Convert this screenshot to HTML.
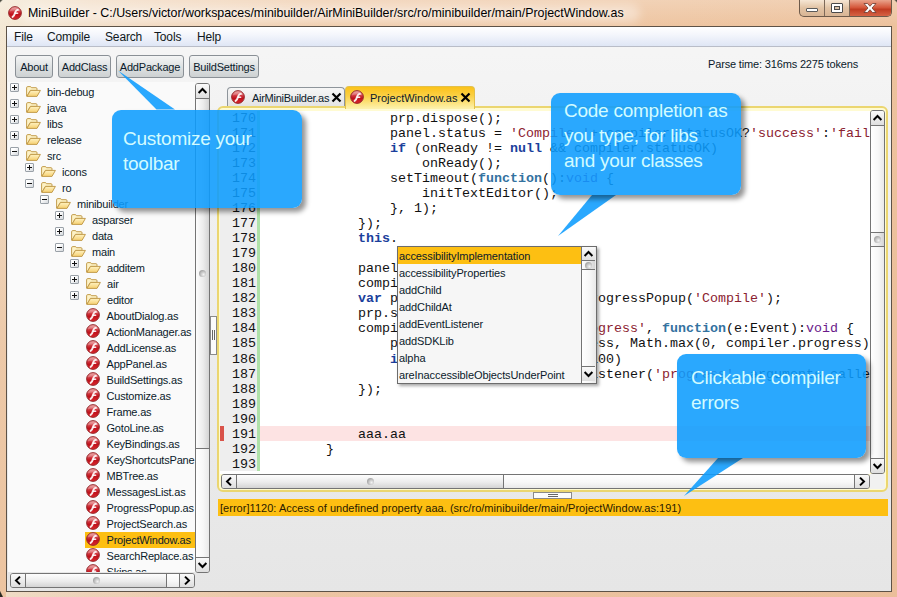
<!DOCTYPE html><html><head><meta charset="utf-8"><title>MiniBuilder</title><style>
*{box-sizing:border-box;margin:0;padding:0}
html,body{width:897px;height:597px;overflow:hidden}
body{position:relative;font-family:"Liberation Sans",sans-serif;font-size:11px;color:#0b1a2b;background:#ecc9a6}
.abs{position:absolute}
#frame{position:absolute;left:0;top:0;width:897px;height:597px;background:
 linear-gradient(to right,#f4e9d6 0,#f2dcc4 90px,#efcaa8 320px,#edc29d 897px);}
#frame:before{content:"";position:absolute;left:0;top:0;width:897px;height:597px;background:linear-gradient(to bottom,rgba(255,255,255,.22) 0,rgba(255,255,255,0) 26px,rgba(226,176,142,.04) 160px,rgba(226,176,142,.14) 380px,rgba(226,176,142,.22) 597px)}
#frame:after{content:"";position:absolute;left:20px;top:4px;width:620px;height:19px;border-radius:10px;background:rgba(255,255,255,.38);filter:blur(5px)}
#lstrip{position:absolute;left:0;top:26px;width:6px;height:571px;background:linear-gradient(to bottom,rgba(236,198,164,0) 0,rgba(236,198,164,.9) 330px,#ecc4a0 571px)}
#title{position:absolute;left:28px;top:6px;font-size:12.4px;color:#000;white-space:nowrap;letter-spacing:0;text-shadow:0 0 5px rgba(255,255,255,.8)}
#client{position:absolute;left:6px;top:26px;width:886px;height:566px;border:1px solid #5d5247;background:linear-gradient(#f6f6f6 0,#f2f2f2 100px,#e6e6e6 100%)}
#menubar{position:absolute;left:7px;top:27px;width:884px;height:20px;background:linear-gradient(#fff 0,#f4f6fc 40%,#dfe6f5 100%);border-bottom:1px solid #b9bdc8}
#menubar span{position:absolute;top:3px;font-size:12px;color:#101820;letter-spacing:-.15px}
.btn{position:absolute;top:55px;height:23px;border:1px solid #8a9096;border-radius:3px;background:linear-gradient(#f4f5f5,#dfe2e3 50%,#cdd1d2);font-size:11px;line-height:23px;text-align:center;color:#0b1a2b;letter-spacing:-.2px}
#tree{position:absolute;left:8px;top:82px;width:187px;height:490px;background:#fafafa;overflow:hidden}
.row{position:absolute;left:0;height:16px;width:187px;line-height:16px;white-space:nowrap}
.row .t{position:absolute;top:0;letter-spacing:-.2px}
.exp{position:absolute;top:-1px;width:9px;height:9px;border:1px solid #9aa1a8;border-radius:1px;background:linear-gradient(135deg,#fff 30%,#d4d8dc)}
.exp:before{content:"";position:absolute;left:1px;top:3px;width:5px;height:1px;background:#111}
.exp.p:after{content:"";position:absolute;left:3px;top:1px;width:1px;height:5px;background:#111}
.ico{position:absolute;top:0px;width:14px;height:14px}
.fo{position:absolute;top:2px;width:15px;height:11px}
.vs{position:absolute;width:15px;border:1px solid #747474;border-radius:3px;background:linear-gradient(to right,#fff,#f7f7f7 55%,#e9e9e9);overflow:hidden}
.hs{position:absolute;height:15px;border:1px solid #747474;border-radius:3px;background:linear-gradient(#fff,#f7f7f7 55%,#e9e9e9);overflow:hidden}
.vs i,.hs i{position:absolute;display:block}
.vs .b{left:0;width:13px;height:14px;background:linear-gradient(#fafafa,#dedede)}
.hs .b{top:0;width:14px;height:13px;background:linear-gradient(#fafafa,#dedede)}
.vs .l{left:0;width:13px;height:1px;background:#747474}
.hs .l{top:0;width:1px;height:13px;background:#747474}
.vs .th{left:0;width:13px;background:linear-gradient(to right,#fdfdfd,#ececec 55%,#d4d4d4)}
.hs .th{top:0;height:13px;background:linear-gradient(#fdfdfd,#ececec 55%,#d4d4d4)}
.grip{width:7px;height:7px;border-radius:50%;background:radial-gradient(circle at 65% 65%,#f4f4f4 0,#a0a0a0 75%)}
.vs svg,.hs svg{position:absolute;left:0;top:0}
.tab{position:absolute;top:87px;height:21px;border:1px solid #8e959b;border-bottom:none;border-radius:4px 4px 0 0;font-size:11px;line-height:20px;white-space:nowrap}
#panel{position:absolute;left:217px;top:106px;width:671px;height:386px;border:2px solid #ebd670;border-radius:6px;background:#fffbd2}
#ed{position:absolute;left:220px;top:111px;width:650px;height:363px;background:#fff;overflow:hidden;font-family:"Liberation Mono",monospace;font-size:13.33px;line-height:15px;color:#111}
#gutter{position:absolute;left:0;top:0;width:37px;height:360px;background:#eeeeee}
#gline{position:absolute;left:37px;top:0;width:3px;height:360px;background:#aee1a8}
.ln{position:absolute;left:12px;white-space:pre}
.cl{position:absolute;left:42px;white-space:pre}
.kw{color:#1b3f9c;font-weight:bold}
.kf{color:#33729f;font-weight:bold}
.st{color:#8b2230}
.ty{color:#6a1a8a}
#ac{position:absolute;left:397px;top:246px;width:200px;height:138px;border:1px solid #6c6c6c;background:#f6f6f6;box-shadow:2px 2px 3px rgba(0,0,0,.35)}
#ac div.i{position:absolute;left:0;width:183px;height:17px;line-height:19px;padding-left:1px;font-size:11px;white-space:nowrap;letter-spacing:-.1px}
#err{position:absolute;left:218px;top:499px;width:670px;height:17px;background:#fdbf12;font-size:11px;line-height:19px;letter-spacing:.03px;padding-left:2px;white-space:nowrap;color:#2a1a00}
.call{position:absolute;border-radius:9px;background:rgba(13,156,254,.88);box-shadow:4px 4px 5px rgba(0,0,0,.42);color:#d2fbff;font-size:19px;letter-spacing:-.25px;line-height:25px;white-space:nowrap}
.call span{position:absolute}
</style></head><body>

<svg width="0" height="0" style="position:absolute">
<defs>
<radialGradient id="rg" cx="40%" cy="30%" r="75%"><stop offset="0" stop-color="#f57a72"/><stop offset=".45" stop-color="#d8252a"/><stop offset="1" stop-color="#a00d14"/></radialGradient>
<linearGradient id="rl" x1="0" y1="0" x2="0" y2="1"><stop offset="0" stop-color="#ea9a9a"/><stop offset=".42" stop-color="#cf3039"/><stop offset=".6" stop-color="#be121c"/><stop offset="1" stop-color="#dc262c"/></linearGradient>
<linearGradient id="fg" x1="0" y1="0" x2="0" y2="1"><stop offset="0" stop-color="#fff3c4"/><stop offset="1" stop-color="#f6cf6e"/></linearGradient>
<symbol id="fl" viewBox="0 0 14 14">
<circle cx="7" cy="7" r="6.4" fill="url(#rl)" stroke="#8e2528" stroke-width=".9"/>
<path d="M1.6 5.6 A5.6 5.6 0 0 1 12.4 5.6 A9 4.4 0 0 0 1.6 5.6Z" fill="#fff" opacity=".22"/>
<path d="M9.9 3.9 C8.2 3.8 7.6 5.3 7.1 6.9 C6.6 8.6 6 10 4.6 10.9" fill="none" stroke="#fff" stroke-width="1.9" stroke-linecap="round" opacity=".9"/><path d="M7.2 7.2 L9.6 7.2" stroke="#fff" stroke-width="1.6" stroke-linecap="round" opacity=".9"/>
</symbol>
<symbol id="fo" viewBox="0 0 15 11">
<path d="M0.6 10 L0.6 1.8 Q0.6 0.6 1.8 0.6 L4.2 0.6 Q5.2 0.6 5.5 1.7 L10 1.7 Q11 1.7 11 2.8 L11 4.4 L4.4 4.4 L1 10.2Z" fill="#fdf2c6" stroke="#c39d4e" stroke-width="1" stroke-linejoin="round"/>
<path d="M0.9 10.4 L4.5 4.4 L14.4 4.4 L11 10.4 Z" fill="url(#fg)" stroke="#c39d4e" stroke-width="1" stroke-linejoin="round"/>
</symbol>
</defs></svg>

<div id="frame"></div><div id="lstrip"></div><div class="abs" style="left:0;top:591px;width:3px;height:6px;background:linear-gradient(to top right,#2a2a22 40%,rgba(42,42,34,0) 60%)"></div><div class="abs" style="left:0;top:0;width:3px;height:3px;background:linear-gradient(to bottom right,#4a4a40 25%,rgba(74,74,64,0) 55%)"></div><div class="abs" style="left:894px;top:0;width:3px;height:3px;background:linear-gradient(to bottom left,#4a4a40 25%,rgba(74,74,64,0) 55%)"></div>
<svg class="abs" style="left:8px;top:6px" width="14" height="14"><use href="#fl"/></svg>
<div id="title">MiniBuilder - C:/Users/victor/workspaces/minibuilder/AirMiniBuilder/src/ro/minibuilder/main/ProjectWindow.as</div>
<div class="abs" style="left:799px;top:0;width:93px;height:17px;border:1px solid #6d5a4a;border-top:none;border-radius:0 0 5px 5px;overflow:hidden;background:linear-gradient(#f6e6d4,#e2c3a4 50%,#d8b595)">
<div class="abs" style="left:24px;top:0;width:1px;height:17px;background:#7d6959"></div>
<div class="abs" style="left:49px;top:0;width:1px;height:17px;background:#7d6959"></div>
<div class="abs" style="left:50px;top:0;width:42px;height:17px;background:linear-gradient(#e9a48c,#d4563a 45%,#c03c22 55%,#d9694a)"></div>
<div class="abs" style="left:6px;top:8px;width:12px;height:4px;background:#fff;border:1px solid #5a5a5a;border-radius:1px"></div>
<div class="abs" style="left:31px;top:3px;width:12px;height:10px;background:#fff;border:1px solid #4a4a4a;border-radius:1px"></div>
<div class="abs" style="left:34px;top:6px;width:6px;height:4px;background:#d7c0a8;border:1px solid #4a4a4a"></div>
<svg class="abs" style="left:62px;top:2px" width="16" height="12" viewBox="0 0 16 12"><path d="M2 1.5 L5.5 1.5 L8 4.3 L10.5 1.5 L14 1.5 L10 6 L14 10.5 L10.5 10.5 L8 7.7 L5.5 10.5 L2 10.5 L6 6 Z" fill="#fff" stroke="#6a3a30" stroke-width=".8"/></svg>
</div>
<div id="client"></div>
<div id="menubar">
<span style="left:7px">File</span>
<span style="left:40px">Compile</span>
<span style="left:98px">Search</span>
<span style="left:147px">Tools</span>
<span style="left:190px">Help</span>
</div>
<div class="btn" style="left:15px;width:38px">About</div>
<div class="btn" style="left:58px;width:53px">AddClass</div>
<div class="btn" style="left:116px;width:68px">AddPackage</div>
<div class="btn" style="left:189px;width:70px">BuildSettings</div>
<div class="abs" style="left:708px;top:58px;font-size:11px;white-space:nowrap;letter-spacing:-.16px">Parse time: 316ms 2275 tokens</div>
<div id="tree">
<div class="row" style="top:2px"><i class="exp p" style="left:2px"></i><svg class="fo" style="left:18px"><use href="#fo"/></svg><span class="t" style="left:39px">bin-debug</span></div>
<div class="row" style="top:18px"><i class="exp p" style="left:2px"></i><svg class="fo" style="left:18px"><use href="#fo"/></svg><span class="t" style="left:39px">java</span></div>
<div class="row" style="top:34px"><i class="exp p" style="left:2px"></i><svg class="fo" style="left:18px"><use href="#fo"/></svg><span class="t" style="left:39px">libs</span></div>
<div class="row" style="top:50px"><i class="exp p" style="left:2px"></i><svg class="fo" style="left:18px"><use href="#fo"/></svg><span class="t" style="left:39px">release</span></div>
<div class="row" style="top:66px"><i class="exp m" style="left:2px"></i><svg class="fo" style="left:18px"><use href="#fo"/></svg><span class="t" style="left:39px">src</span></div>
<div class="row" style="top:82px"><i class="exp p" style="left:17px"></i><svg class="fo" style="left:33px"><use href="#fo"/></svg><span class="t" style="left:54px">icons</span></div>
<div class="row" style="top:98px"><i class="exp m" style="left:17px"></i><svg class="fo" style="left:33px"><use href="#fo"/></svg><span class="t" style="left:54px">ro</span></div>
<div class="row" style="top:114px"><i class="exp m" style="left:32px"></i><svg class="fo" style="left:48px"><use href="#fo"/></svg><span class="t" style="left:69px">minibuilder</span></div>
<div class="row" style="top:130px"><i class="exp p" style="left:47px"></i><svg class="fo" style="left:63px"><use href="#fo"/></svg><span class="t" style="left:84px">asparser</span></div>
<div class="row" style="top:146px"><i class="exp p" style="left:47px"></i><svg class="fo" style="left:63px"><use href="#fo"/></svg><span class="t" style="left:84px">data</span></div>
<div class="row" style="top:162px"><i class="exp m" style="left:47px"></i><svg class="fo" style="left:63px"><use href="#fo"/></svg><span class="t" style="left:84px">main</span></div>
<div class="row" style="top:178px"><i class="exp p" style="left:62px"></i><svg class="fo" style="left:78px"><use href="#fo"/></svg><span class="t" style="left:99px">additem</span></div>
<div class="row" style="top:194px"><i class="exp p" style="left:62px"></i><svg class="fo" style="left:78px"><use href="#fo"/></svg><span class="t" style="left:99px">air</span></div>
<div class="row" style="top:210px"><i class="exp p" style="left:62px"></i><svg class="fo" style="left:78px"><use href="#fo"/></svg><span class="t" style="left:99px">editor</span></div>
<div class="row" style="top:226px"><svg class="ico" style="left:78px"><use href="#fl"/></svg><span class="t" style="left:98.5px">AboutDialog.as</span></div>
<div class="row" style="top:242px"><svg class="ico" style="left:78px"><use href="#fl"/></svg><span class="t" style="left:98.5px">ActionManager.as</span></div>
<div class="row" style="top:258px"><svg class="ico" style="left:78px"><use href="#fl"/></svg><span class="t" style="left:98.5px">AddLicense.as</span></div>
<div class="row" style="top:274px"><svg class="ico" style="left:78px"><use href="#fl"/></svg><span class="t" style="left:98.5px">AppPanel.as</span></div>
<div class="row" style="top:290px"><svg class="ico" style="left:78px"><use href="#fl"/></svg><span class="t" style="left:98.5px">BuildSettings.as</span></div>
<div class="row" style="top:306px"><svg class="ico" style="left:78px"><use href="#fl"/></svg><span class="t" style="left:98.5px">Customize.as</span></div>
<div class="row" style="top:322px"><svg class="ico" style="left:78px"><use href="#fl"/></svg><span class="t" style="left:98.5px">Frame.as</span></div>
<div class="row" style="top:338px"><svg class="ico" style="left:78px"><use href="#fl"/></svg><span class="t" style="left:98.5px">GotoLine.as</span></div>
<div class="row" style="top:354px"><svg class="ico" style="left:78px"><use href="#fl"/></svg><span class="t" style="left:98.5px">KeyBindings.as</span></div>
<div class="row" style="top:370px"><svg class="ico" style="left:78px"><use href="#fl"/></svg><span class="t" style="left:98.5px">KeyShortcutsPane</span></div>
<div class="row" style="top:386px"><svg class="ico" style="left:78px"><use href="#fl"/></svg><span class="t" style="left:98.5px">MBTree.as</span></div>
<div class="row" style="top:402px"><svg class="ico" style="left:78px"><use href="#fl"/></svg><span class="t" style="left:98.5px">MessagesList.as</span></div>
<div class="row" style="top:418px"><svg class="ico" style="left:78px"><use href="#fl"/></svg><span class="t" style="left:98.5px">ProgressPopup.as</span></div>
<div class="row" style="top:434px"><svg class="ico" style="left:78px"><use href="#fl"/></svg><span class="t" style="left:98.5px">ProjectSearch.as</span></div>
<div class="row" style="top:450px"><i class="abs" style="left:77px;top:0;width:110px;height:16px;background:#fdbf12"></i><svg class="ico" style="left:78px"><use href="#fl"/></svg><span class="t" style="left:98.5px">ProjectWindow.as</span></div>
<div class="row" style="top:466px"><svg class="ico" style="left:78px"><use href="#fl"/></svg><span class="t" style="left:98.5px">SearchReplace.as</span></div>
<div class="row" style="top:482px"><svg class="ico" style="left:78px"><use href="#fl"/></svg><span class="t" style="left:98.5px">Skins.as</span></div>
</div>
<div class="vs" style="left:195px;top:83px;height:490px"><i class="b" style="top:0"><svg width="13" height="14" viewBox="0 0 13 14"><path d="M2.6 9 L6.5 5 L10.4 9" fill="none" stroke="#000" stroke-width="2"/></svg></i><i class="l" style="top:14px"></i><i class="th" style="top:15px;height:349px"></i><i class="l" style="top:14px"></i><i class="l" style="top:364px"></i><i class="grip" style="left:3px;top:186px"></i><i class="l" style="top:473px"></i><i class="b" style="top:474px"><svg width="13" height="14" viewBox="0 0 13 14"><path d="M2.6 5 L6.5 9 L10.4 5" fill="none" stroke="#000" stroke-width="2"/></svg></i></div>
<div class="hs" style="left:10px;top:573px;width:185px"><i class="b" style="left:0"><svg width="14" height="13" viewBox="0 0 14 13"><path d="M9 2.6 L5 6.5 L9 10.4" fill="none" stroke="#000" stroke-width="2"/></svg></i><i class="l" style="left:14px"></i><i class="th" style="left:15px;width:140px"></i><i class="l" style="left:14px"></i><i class="l" style="left:155px"></i><i class="grip" style="top:3px;left:82px"></i><i class="l" style="left:168px"></i><i class="b" style="left:169px"><svg width="14" height="13" viewBox="0 0 14 13"><path d="M5 2.6 L9 6.5 L5 10.4" fill="none" stroke="#000" stroke-width="2"/></svg></i></div>
<div class="abs" style="left:210px;top:316px;width:7px;height:39px;border:1px solid #8a8a8a;background:#fcfcfc"></div>
<div class="abs" style="left:212px;top:330px;width:1px;height:10px;background:#666"></div><div class="abs" style="left:214px;top:330px;width:1px;height:10px;background:#666"></div>
<div class="tab" style="left:227px;width:118px;background:linear-gradient(#f6f6f6,#e2e2e2);color:#0b1a2b"></div>
<svg class="abs" style="left:231px;top:90px" width="14" height="14"><use href="#fl"/></svg>
<div class="abs" style="left:252px;top:92px;font-size:11px;white-space:nowrap;letter-spacing:-.28px">AirMiniBuilder.as</div>
<svg class="abs" style="left:331px;top:92px" width="11" height="11" viewBox="0 0 11 11"><path d="M1.5 1.5 L9.5 9.5 M9.5 1.5 L1.5 9.5" stroke="#000" stroke-width="2.2"/></svg>
<div class="tab" style="left:345px;width:130px;top:86px;height:23px;background:linear-gradient(#fbc21a,#fbd044 40%,#fdf3b0);border-color:#e3c04a;z-index:2"></div>
<svg class="abs"  style="z-index:3;left:350px;top:90px" width="14" height="14"><use href="#fl"/></svg>
<div class="abs" style="left:370px;top:92px;font-size:11px;white-space:nowrap;z-index:3">ProjectWindow.as</div>
<svg class="abs" style="left:460px;top:92px;z-index:3" width="11" height="11" viewBox="0 0 11 11"><path d="M1.5 1.5 L9.5 9.5 M9.5 1.5 L1.5 9.5" stroke="#000" stroke-width="2.2"/></svg>
<div id="panel"></div>
<div id="ed"><div id="gutter"></div><div id="gline"></div>
<div class="abs" style="left:40px;top:315px;width:620px;height:15px;background:#fde3e3"></div>
<div class="abs" style="left:0px;top:315px;width:4px;height:15px;background:#d9534a"></div>
<div class="ln" style="top:0px">170</div><div class="cl" style="top:0px">                prp.dispose();</div>
<div class="ln" style="top:15px">171</div><div class="cl" style="top:15px">                panel.status = <span class="st">&#x27;Compile &#x27;</span>+ compiler.statusOK?<span class="st">&#x27;success&#x27;</span>:<span class="st">&#x27;fail</span></div>
<div class="ln" style="top:30px">172</div><div class="cl" style="top:30px">                <span class="kw">if</span> (onReady != <span class="kw">null</span> &amp;&amp; compiler.statusOK)</div>
<div class="ln" style="top:45px">173</div><div class="cl" style="top:45px">                    onReady();</div>
<div class="ln" style="top:60px">174</div><div class="cl" style="top:60px">                setTimeout(<span class="kf">function</span>():<span class="ty">void</span> {</div>
<div class="ln" style="top:75px">175</div><div class="cl" style="top:75px">                    initTextEditor();</div>
<div class="ln" style="top:90px">176</div><div class="cl" style="top:90px">                }, 1);</div>
<div class="ln" style="top:105px">177</div><div class="cl" style="top:105px">            });</div>
<div class="ln" style="top:120px">178</div><div class="cl" style="top:120px">            <span class="kw">this</span>.</div>
<div class="ln" style="top:135px">179</div><div class="cl" style="top:135px"></div>
<div class="ln" style="top:150px">180</div><div class="cl" style="top:150px">            panel.status = <span class="st">&#x27;Compiling&#x27;</span>;</div>
<div class="ln" style="top:165px">181</div><div class="cl" style="top:165px">            compiler.compile();</div>
<div class="ln" style="top:180px">182</div><div class="cl" style="top:180px">            <span class="kw">var</span> prp:ProgressPopup = <span class="kw">new</span> ProgressPopup(<span class="st">&#x27;Compile&#x27;</span>);</div>
<div class="ln" style="top:195px">183</div><div class="cl" style="top:195px">            prp.show(stage);</div>
<div class="ln" style="top:210px">184</div><div class="cl" style="top:210px">            compiler.addEventListener(<span class="st">&#x27;progress&#x27;</span>, <span class="kf">function</span>(e:Event):<span class="ty">void</span> {</div>
<div class="ln" style="top:225px">185</div><div class="cl" style="top:225px">                prp.bar.setProgress(progress, Math.max(0, compiler.progress)</div>
<div class="ln" style="top:241px">186</div><div class="cl" style="top:241px">                <span class="kw">if</span> (compiler.progress &gt;= 100)</div>
<div class="ln" style="top:256px">187</div><div class="cl" style="top:256px">                    e.target.removeEventListener(<span class="st">&#x27;progress&#x27;</span>, arguments.calle</div>
<div class="ln" style="top:271px">188</div><div class="cl" style="top:271px">            });</div>
<div class="ln" style="top:286px">189</div><div class="cl" style="top:286px"></div>
<div class="ln" style="top:301px">190</div><div class="cl" style="top:301px"></div>
<div class="ln" style="top:316px">191</div><div class="cl" style="top:316px">            aaa.aa</div>
<div class="ln" style="top:331px">192</div><div class="cl" style="top:331px">        }</div>
<div class="ln" style="top:346px">193</div><div class="cl" style="top:346px"></div>
</div>
<div class="abs" style="left:870px;top:474px;width:15px;height:15px;background:#f1f1f1"></div>
<div class="vs" style="left:870px;top:110px;height:364px"><i class="b" style="top:0"><svg width="13" height="14" viewBox="0 0 13 14"><path d="M2.6 9 L6.5 5 L10.4 9" fill="none" stroke="#000" stroke-width="2"/></svg></i><i class="l" style="top:14px"></i><i class="th" style="top:122px;height:13px"></i><i class="l" style="top:121px"></i><i class="l" style="top:135px"></i><i class="grip" style="left:3px;top:125px"></i><i class="l" style="top:347px"></i><i class="b" style="top:348px"><svg width="13" height="14" viewBox="0 0 13 14"><path d="M2.6 5 L6.5 9 L10.4 5" fill="none" stroke="#000" stroke-width="2"/></svg></i></div>
<div class="hs" style="left:221px;top:474px;width:649px"><i class="b" style="left:0"><svg width="14" height="13" viewBox="0 0 14 13"><path d="M9 2.6 L5 6.5 L9 10.4" fill="none" stroke="#000" stroke-width="2"/></svg></i><i class="l" style="left:14px"></i><i class="th" style="left:15px;width:266px"></i><i class="l" style="left:14px"></i><i class="l" style="left:281px"></i><i class="grip" style="top:3px;left:145px"></i><i class="l" style="left:632px"></i><i class="b" style="left:633px"><svg width="14" height="13" viewBox="0 0 14 13"><path d="M5 2.6 L9 6.5 L5 10.4" fill="none" stroke="#000" stroke-width="2"/></svg></i></div>
<div class="abs" style="left:533px;top:492px;width:39px;height:7px;border:1px solid #8a8a8a;background:#fcfcfc"></div>
<div class="abs" style="left:548px;top:494px;width:10px;height:1px;background:#666"></div><div class="abs" style="left:548px;top:496px;width:10px;height:1px;background:#666"></div>
<div id="ac">
<div class="i" style="top:0px;background:#fdbf12">accessibilityImplementation</div>
<div class="i" style="top:17px">accessibilityProperties</div>
<div class="i" style="top:34px">addChild</div>
<div class="i" style="top:51px">addChildAt</div>
<div class="i" style="top:68px">addEventListener</div>
<div class="i" style="top:85px">addSDKLib</div>
<div class="i" style="top:102px">alpha</div>
<div class="i" style="top:119px">areInaccessibleObjectsUnderPoint</div>
<div class="vs" style="border-radius:0;border-width:0 0 0 1px;width:15px;left:183px;top:0px;height:136px"><i class="b" style="top:0"><svg width="13" height="14" viewBox="0 0 13 14"><path d="M2.6 9 L6.5 5 L10.4 9" fill="none" stroke="#000" stroke-width="2"/></svg></i><i class="l" style="top:14px"></i><i class="th" style="top:14px;height:8px"></i><i class="l" style="top:13px"></i><i class="l" style="top:22px"></i><i class="grip" style="left:3px;top:15px"></i><i class="l" style="top:119px"></i><i class="b" style="top:120px"><svg width="13" height="14" viewBox="0 0 13 14"><path d="M2.6 5 L6.5 9 L10.4 5" fill="none" stroke="#000" stroke-width="2"/></svg></i></div>
</div>
<div id="err">[error]1120: Access of undefined property aaa. (src/ro/minibuilder/main/ProjectWindow.as:191)</div>
<svg class="abs" style="left:0;top:0;z-index:9;pointer-events:none" width="897" height="597"><polygon points="118,70.5 156.5,109.5 175,109.5" fill="rgba(13,156,254,.88)"/></svg>
<div class="call" style="left:112px;top:109.5px;width:190px;height:98px;z-index:10"><span style="left:11px;top:16.5px">Customize your</span><span style="left:11px;top:41.5px">toolbar</span></div>
<svg class="abs" style="left:0;top:0;z-index:9;pointer-events:none" width="897" height="597"><polygon points="558,236 592,195 616,195" fill="rgba(13,156,254,.88)"/></svg>
<div class="call" style="left:551px;top:93px;width:190px;height:102px;z-index:10"><span style="left:13px;top:5px">Code completion as</span><span style="left:13px;top:30px">you type, for libs</span><span style="left:13px;top:55px">and your classes</span></div>
<svg class="abs" style="left:0;top:0;z-index:9;pointer-events:none" width="897" height="597"><polygon points="684,496 718,458 743,458" fill="rgba(13,156,254,.88)"/></svg>
<div class="call" style="left:677px;top:354px;width:189px;height:104px;z-index:10"><span style="left:14px;top:11px">Clickable compiler</span><span style="left:14px;top:36px">errors</span></div>
</body></html>
